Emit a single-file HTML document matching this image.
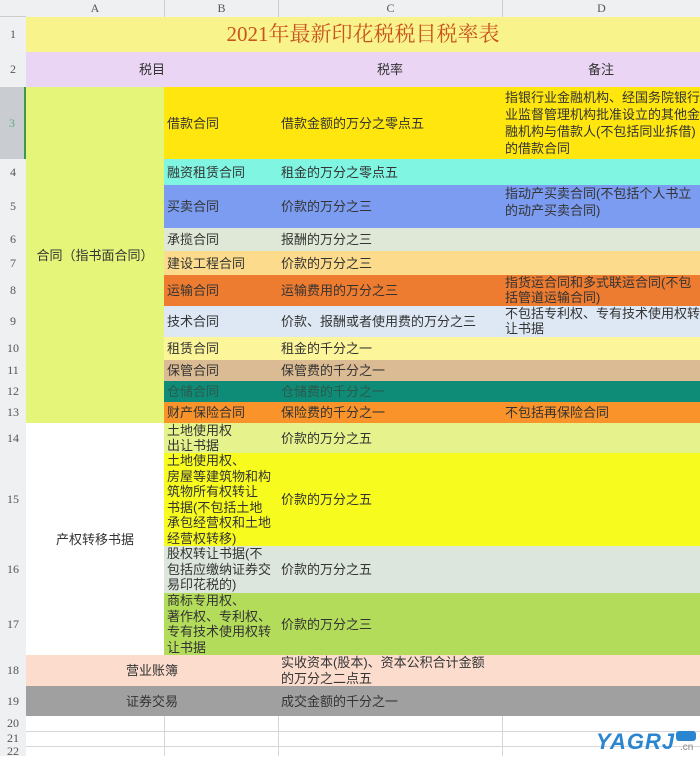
<!DOCTYPE html><html><head><meta charset="utf-8"><style>
body{margin:0;width:700px;height:756px;overflow:hidden;background:#fff;font-family:"Liberation Sans","Noto Sans CJK SC",sans-serif;font-size:13px;color:#333;position:relative}
.c{position:absolute;display:flex;align-items:center;box-sizing:border-box;padding-left:3px;line-height:15px;overflow:hidden;white-space:nowrap}
.h{position:absolute;background:#eef0f2;color:#555;display:flex;align-items:center;justify-content:center;font-family:"Liberation Serif",serif;font-size:12px;box-sizing:border-box}
.ctr{justify-content:center;padding-left:0}
.g{position:absolute;background:#d6d6d6}
.t{line-height:15.5px}
</style></head><body>
<div class="h" style="left:0;top:0;width:700px;height:17px;border-bottom:1px solid #ccc"></div>
<div class="h" style="left:26px;top:0;width:138px;height:17px">A</div>
<div class="h" style="left:164px;top:0;width:114px;height:17px;border-left:1px solid #ccc">B</div>
<div class="h" style="left:278px;top:0;width:224px;height:17px;border-left:1px solid #ccc">C</div>
<div class="h" style="left:502px;top:0;width:198px;height:17px;border-left:1px solid #ccc">D</div>
<div class="h" style="left:0;top:17px;width:26px;height:739px;border-right:1px solid #ccc"></div>
<div class="h" style="left:0;top:87px;width:26px;height:72px;background:#c9cdd1;border-right:2px solid #3a9a4a;color:#6a8;">3</div>
<div class="h" style="left:0;top:17px;width:26px;height:35px">1</div>
<div class="h" style="left:0;top:52px;width:26px;height:35px">2</div>
<div class="h" style="left:0;top:159px;width:26px;height:26px">4</div>
<div class="h" style="left:0;top:185px;width:26px;height:43px">5</div>
<div class="h" style="left:0;top:228px;width:26px;height:23px">6</div>
<div class="h" style="left:0;top:251px;width:26px;height:24px">7</div>
<div class="h" style="left:0;top:275px;width:26px;height:31px">8</div>
<div class="h" style="left:0;top:306px;width:26px;height:31px">9</div>
<div class="h" style="left:0;top:337px;width:26px;height:23px">10</div>
<div class="h" style="left:0;top:360px;width:26px;height:21px">11</div>
<div class="h" style="left:0;top:381px;width:26px;height:21px">12</div>
<div class="h" style="left:0;top:402px;width:26px;height:21px">13</div>
<div class="h" style="left:0;top:423px;width:26px;height:30px">14</div>
<div class="h" style="left:0;top:453px;width:26px;height:93px">15</div>
<div class="h" style="left:0;top:546px;width:26px;height:47px">16</div>
<div class="h" style="left:0;top:593px;width:26px;height:62px">17</div>
<div class="h" style="left:0;top:655px;width:26px;height:31px">18</div>
<div class="h" style="left:0;top:686px;width:26px;height:30px">19</div>
<div class="h" style="left:0;top:716px;width:26px;height:15px">20</div>
<div class="h" style="left:0;top:731px;width:26px;height:15px">21</div>
<div class="h" style="left:0;top:746px;width:26px;height:10px">22</div>

<div class="c ctr" style="left:26px;top:17px;width:674px;height:35px;background:#f8f38a;color:#c8541e;font-size:21px;font-family:'Liberation Serif','Noto Serif CJK SC',serif">2021年最新印花税税目税率表</div>
<div class="c ctr" style="left:26px;top:52px;width:252px;height:35px;background:#ead5f5">税目</div>
<div class="c ctr" style="left:278px;top:52px;width:224px;height:35px;background:#ead5f5">税率</div>
<div class="c ctr" style="left:502px;top:52px;width:198px;height:35px;background:#ead5f5">备注</div>
<div class="c ctr" style="left:26px;top:87px;width:138px;height:336px;background:#e5f57a">合同（指书面合同）</div>
<div class="c ctr" style="left:26px;top:423px;width:138px;height:232px;background:#fff">产权转移书据</div>

<div class="c" style="left:164px;top:87px;width:536px;height:72px;background:#ffe60f"></div>
<div class="c" style="left:164px;top:87px;width:114px;height:72px">借款合同</div>
<div class="c" style="left:278px;top:87px;width:224px;height:72px">借款金额的万分之零点五</div>
<div class="c" style="left:502px;top:87px;width:198px;height:72px;line-height:17px">指银行业金融机构、经国务院银行<br>业监督管理机构批准设立的其他金<br>融机构与借款人(不包括同业拆借)<br>的借款合同</div>

<div class="c" style="left:164px;top:159px;width:536px;height:26px;background:#80f5e2"></div>
<div class="c" style="left:164px;top:159px;width:114px;height:26px">融资租赁合同</div>
<div class="c" style="left:278px;top:159px;width:224px;height:26px">租金的万分之零点五</div>

<div class="c" style="left:164px;top:185px;width:536px;height:43px;background:#7b9cf0"></div>
<div class="c" style="left:164px;top:185px;width:114px;height:43px">买卖合同</div>
<div class="c" style="left:278px;top:185px;width:224px;height:43px">价款的万分之三</div>
<div class="c" style="left:502px;top:185px;width:198px;height:43px;align-items:flex-start;padding-top:0;line-height:17px">指动产买卖合同(不包括个人书立<br>的动产买卖合同)</div>

<div class="c" style="left:164px;top:228px;width:536px;height:23px;background:#dfe8d6"></div>
<div class="c" style="left:164px;top:228px;width:114px;height:23px">承揽合同</div>
<div class="c" style="left:278px;top:228px;width:224px;height:23px">报酬的万分之三</div>

<div class="c" style="left:164px;top:251px;width:536px;height:24px;background:#fcdc8c"></div>
<div class="c" style="left:164px;top:251px;width:114px;height:24px">建设工程合同</div>
<div class="c" style="left:278px;top:251px;width:224px;height:24px">价款的万分之三</div>

<div class="c" style="left:164px;top:275px;width:536px;height:31px;background:#ee7c30"></div>
<div class="c" style="left:164px;top:275px;width:114px;height:31px">运输合同</div>
<div class="c" style="left:278px;top:275px;width:224px;height:31px">运输费用的万分之三</div>
<div class="c" style="left:502px;top:275px;width:198px;height:31px;align-items:flex-start;padding-top:0">指货运合同和多式联运合同(不包<br>括管道运输合同)</div>

<div class="c" style="left:164px;top:306px;width:536px;height:31px;background:#dde8f4"></div>
<div class="c" style="left:164px;top:306px;width:114px;height:31px">技术合同</div>
<div class="c" style="left:278px;top:306px;width:224px;height:31px">价款、报酬或者使用费的万分之三</div>
<div class="c" style="left:502px;top:306px;width:198px;height:31px;align-items:flex-start;padding-top:0">不包括专利权、专有技术使用权转<br>让书据</div>

<div class="c" style="left:164px;top:337px;width:536px;height:23px;background:#fdf59a"></div>
<div class="c" style="left:164px;top:337px;width:114px;height:23px">租赁合同</div>
<div class="c" style="left:278px;top:337px;width:224px;height:23px">租金的千分之一</div>

<div class="c" style="left:164px;top:360px;width:536px;height:21px;background:#dbbb93"></div>
<div class="c" style="left:164px;top:360px;width:114px;height:21px">保管合同</div>
<div class="c" style="left:278px;top:360px;width:224px;height:21px">保管费的千分之一</div>

<div class="c" style="left:164px;top:381px;width:536px;height:21px;background:#0f8c78"></div>
<div class="c" style="left:164px;top:381px;width:114px;height:21px;color:#2b5a4a">仓储合同</div>
<div class="c" style="left:278px;top:381px;width:224px;height:21px;color:#2b5a4a">仓储费的千分之一</div>

<div class="c" style="left:164px;top:402px;width:536px;height:21px;background:#f9932a"></div>
<div class="c" style="left:164px;top:402px;width:114px;height:21px">财产保险合同</div>
<div class="c" style="left:278px;top:402px;width:224px;height:21px">保险费的千分之一</div>
<div class="c" style="left:502px;top:402px;width:198px;height:21px">不包括再保险合同</div>

<div class="c" style="left:164px;top:423px;width:536px;height:30px;background:#e6f38c"></div>
<div class="c t" style="left:164px;top:423px;width:114px;height:30px">土地使用权<br>出让书据</div>
<div class="c" style="left:278px;top:423px;width:224px;height:30px">价款的万分之五</div>

<div class="c" style="left:164px;top:453px;width:536px;height:93px;background:#f7fb1e"></div>
<div class="c t" style="left:164px;top:453px;width:114px;height:93px">土地使用权、<br>房屋等建筑物和构<br>筑物所有权转让<br>书据(不包括土地<br>承包经营权和土地<br>经营权转移)</div>
<div class="c" style="left:278px;top:453px;width:224px;height:93px">价款的万分之五</div>

<div class="c" style="left:164px;top:546px;width:536px;height:47px;background:#dde6dc"></div>
<div class="c t" style="left:164px;top:546px;width:114px;height:47px">股权转让书据(不<br>包括应缴纳证券交<br>易印花税的)</div>
<div class="c" style="left:278px;top:546px;width:224px;height:47px">价款的万分之五</div>

<div class="c" style="left:164px;top:593px;width:536px;height:62px;background:#b3dc5a"></div>
<div class="c t" style="left:164px;top:593px;width:114px;height:62px">商标专用权、<br>著作权、专利权、<br>专有技术使用权转<br>让书据</div>
<div class="c" style="left:278px;top:593px;width:224px;height:62px">价款的万分之三</div>

<div class="c ctr" style="left:26px;top:655px;width:252px;height:31px;background:#fbdccd">营业账簿</div>
<div class="c t" style="left:278px;top:655px;width:224px;height:31px;background:#fbdccd">实收资本(股本)、资本公积合计金额<br>的万分之二点五</div>
<div class="c" style="left:502px;top:655px;width:198px;height:31px;background:#fbdccd"></div>
<div class="c ctr" style="left:26px;top:686px;width:252px;height:30px;background:#a0a0a0">证券交易</div>
<div class="c" style="left:278px;top:686px;width:422px;height:30px;background:#a0a0a0">成交金额的千分之一</div>

<div class="g" style="left:26px;top:731px;width:674px;height:1px"></div>
<div class="g" style="left:26px;top:746px;width:674px;height:1px"></div>
<div class="g" style="left:164px;top:716px;width:1px;height:40px"></div>
<div class="g" style="left:278px;top:716px;width:1px;height:40px"></div>
<div class="g" style="left:502px;top:716px;width:1px;height:40px"></div>
<div style="position:absolute;left:596px;top:729px;font:italic bold 22px 'Liberation Sans',sans-serif;color:#2a86d0;letter-spacing:1px">YAGRJ</div>
<div style="position:absolute;left:676px;top:731px;width:20px;height:10px;background:#2a86d0;border-radius:3px"></div>
<div style="position:absolute;left:680px;top:742px;font-size:10px;color:#888">.cn</div>
</body></html>
